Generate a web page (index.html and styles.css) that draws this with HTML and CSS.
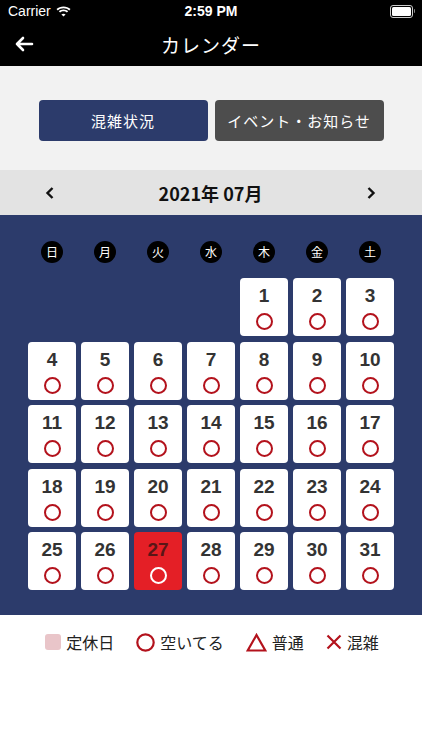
FILE: index.html
```html
<!DOCTYPE html>
<html lang="ja">
<head>
    <meta charset="UTF-8">
    <meta name="viewport" content="width=device-width, initial-scale=1.0">
    <title>カレンダー</title>
    <link rel="stylesheet" href="styles.css">
</head>
<body>
    <header class="top">
        <div class="status">
            <div class="status-left">
                <span>Carrier</span>
                <svg class="wifi" width="15" height="11" viewBox="0 0 15 11">
                    <path d="M7.5 2.2c2.2 0 4.2.8 5.7 2.2l1.3-1.3C12.7 1.4 10.2.4 7.5.4S2.3 1.4.5 3.1l1.3 1.3C3.3 3 5.3 2.2 7.5 2.2z" fill="#fff"/>
                    <path d="M7.5 5.3c1.3 0 2.5.5 3.4 1.3l1.3-1.3C11 4.1 9.3 3.4 7.5 3.4S4 4.1 2.8 5.3l1.3 1.3c.9-.8 2.1-1.3 3.4-1.3z" fill="#fff"/>
                    <path d="M7.5 10.6l2.1-2.1c-.6-.5-1.3-.8-2.1-.8s-1.5.3-2.1.8z" fill="#fff"/>
                </svg>
            </div>
            <div class="status-time">2:59 PM</div>
            <div class="status-right">
                <div class="battery"><div class="battery-fill"></div></div>
                <div class="battery-nub"></div>
            </div>
        </div>
        <div class="nav">
            <svg class="back" width="20" height="16" viewBox="0 0 20 16">
                <path d="M18 8H3M9 2L3 8l6 6" stroke="#fff" stroke-width="2.6" fill="none" stroke-linecap="round" stroke-linejoin="round"/>
            </svg>
            <h1>カレンダー</h1>
        </div>
    </header>

    <div class="tabs">
        <button class="tab tab-active" type="button">混雑状況</button>
        <button class="tab" type="button">イベント・お知らせ</button>
    </div>

    <div class="month-bar">
        <svg class="chev" width="10" height="14" viewBox="0 0 10 14">
            <path d="M7.5 2L2.5 7l5 5" stroke="#111" stroke-width="2.4" fill="none"/>
        </svg>
        <div class="month-title">2021年 07月</div>
        <svg class="chev" width="10" height="14" viewBox="0 0 10 14">
            <path d="M2.5 2l5 5-5 5" stroke="#111" stroke-width="2.4" fill="none"/>
        </svg>
    </div>

    <section class="calendar">
        <div class="week">
            <span class="wd">日</span>
            <span class="wd">月</span>
            <span class="wd">火</span>
            <span class="wd">水</span>
            <span class="wd">木</span>
            <span class="wd">金</span>
            <span class="wd">土</span>
        </div>
        <div class="days" id="days"></div>
    </section>

    <div class="legend">
        <div class="legend-item"><span class="lg-square"></span>定休日</div>
        <div class="legend-item">
            <svg width="19" height="19" viewBox="0 0 19 19"><circle cx="9.5" cy="9.5" r="8.2" stroke="#b3121c" stroke-width="2.2" fill="none"/></svg>
            空いてる
        </div>
        <div class="legend-item">
            <svg width="21" height="19" viewBox="0 0 21 19"><path d="M10.5 2L19.3 17.5H1.7z" stroke="#b3121c" stroke-width="2.2" fill="none" stroke-linejoin="miter"/></svg>
            普通
        </div>
        <div class="legend-item">
            <svg width="16" height="16" viewBox="0 0 16 16"><path d="M1.5 1.5l13 13M14.5 1.5l-13 13" stroke="#b3121c" stroke-width="2.2"/></svg>
            混雑
        </div>
    </div>

    <script>
        // July 2021 starts on Thursday
        const firstWeekday = 4;
        const daysInMonth = 31;
        const today = 27;
        const grid = document.getElementById('days');

        for (let i = 0; i < firstWeekday; i++) {
            const blank = document.createElement('div');
            blank.className = 'day day-empty';
            grid.appendChild(blank);
        }

        for (let d = 1; d <= daysInMonth; d++) {
            const cell = document.createElement('div');
            cell.className = 'day' + (d === today ? ' day-today' : '');
            cell.innerHTML = `<span class="num">${d}</span><span class="mark"></span>`;
            grid.appendChild(cell);
        }
    </script>
</body>
</html>
```

FILE: styles.css
```css
body {
    margin: 0;
    padding: 0;
    width: 422px;
    background-color: #ffffff;
    font-family: "Noto Sans CJK JP", "Noto Sans", sans-serif;
}

.top {
    background-color: #000000;
    color: #ffffff;
    height: 66px;
}

.status {
    height: 22px;
    display: flex;
    align-items: center;
    justify-content: space-between;
    padding: 0 7px 0 8px;
    font-family: "Liberation Sans", Arial, sans-serif;
    font-size: 14px;
    position: relative;
}

.status-left {
    display: flex;
    align-items: center;
    gap: 5px;
}

.status-time {
    position: absolute;
    left: 0;
    right: 0;
    text-align: center;
    font-weight: bold;
    font-size: 14px;
}

.status-right {
    display: flex;
    align-items: center;
    gap: 1px;
}

.battery {
    width: 19px;
    height: 9px;
    border: 1.3px solid #cccccc;
    border-radius: 3px;
    padding: 1px;
}

.battery-fill {
    width: 100%;
    height: 100%;
    background-color: #ffffff;
    border-radius: 1.5px;
}

.battery-nub {
    width: 1.5px;
    height: 4px;
    background-color: #888888;
    border-radius: 0 1px 1px 0;
}

.nav {
    height: 44px;
    display: flex;
    align-items: center;
    justify-content: center;
    position: relative;
}

.nav .back {
    position: absolute;
    left: 14px;
    top: 14px;
}

.nav h1 {
    margin: 0;
    font-size: 19px;
    font-weight: normal;
    letter-spacing: 1px;
}

.tabs {
    background-color: #f2f2f2;
    height: 104px;
    display: flex;
    justify-content: center;
    align-items: flex-start;
    gap: 7px;
    padding-top: 34px;
    box-sizing: border-box;
}

.tab {
    width: 169px;
    height: 41px;
    border: none;
    border-radius: 4px;
    background-color: #4d4d4d;
    color: #ffffff;
    font-family: "Noto Sans CJK JP", sans-serif;
    font-size: 15px;
    letter-spacing: 1px;
    padding: 0;
}

.tab-active {
    background-color: #2c3b6b;
}

.month-bar {
    background-color: #e3e3e3;
    height: 45px;
    display: flex;
    align-items: center;
    justify-content: space-between;
    padding: 0 46px 0 45px;
}

.month-title {
    font-family: "Noto Sans CJK JP", sans-serif;
    font-weight: bold;
    font-size: 18px;
    color: #111111;
}

.calendar {
    background-color: #2c3b6b;
    padding: 26px 28px 25px 28px;
}

.week,
.days {
    display: grid;
    grid-template-columns: repeat(7, 48px);
    column-gap: 5px;
}

.week {
    margin-bottom: 15px;
    justify-items: center;
}

.wd {
    width: 22px;
    height: 22px;
    border-radius: 50%;
    background-color: #000000;
    color: #ffffff;
    font-size: 12px;
    line-height: 22px;
    text-align: center;
}

.days {
    row-gap: 5.5px;
}

.day {
    height: 58px;
    background-color: #ffffff;
    border-radius: 4px;
    display: flex;
    flex-direction: column;
    align-items: center;
}

.day-empty {
    background-color: transparent;
}

.num {
    font-family: "Liberation Sans", Arial, sans-serif;
    font-weight: bold;
    font-size: 19px;
    color: #333333;
    margin-top: 8px;
    line-height: 20px;
}

.mark {
    width: 13px;
    height: 13px;
    border: 2px solid #b3121c;
    border-radius: 50%;
    margin-top: 7px;
}

.day-today {
    background-color: #e41f26;
}

.day-today .num {
    color: #5a1616;
}

.day-today .mark {
    border-color: #ffffff;
}

.legend {
    display: flex;
    justify-content: center;
    align-items: center;
    gap: 22px;
    padding-top: 15px;
    padding-left: 2px;
    font-size: 16px;
    color: #222222;
}

.legend-item {
    display: flex;
    align-items: center;
    gap: 5px;
}

.lg-square {
    width: 16px;
    height: 16px;
    border-radius: 3px;
    background-color: #e9c5c9;
}
```
